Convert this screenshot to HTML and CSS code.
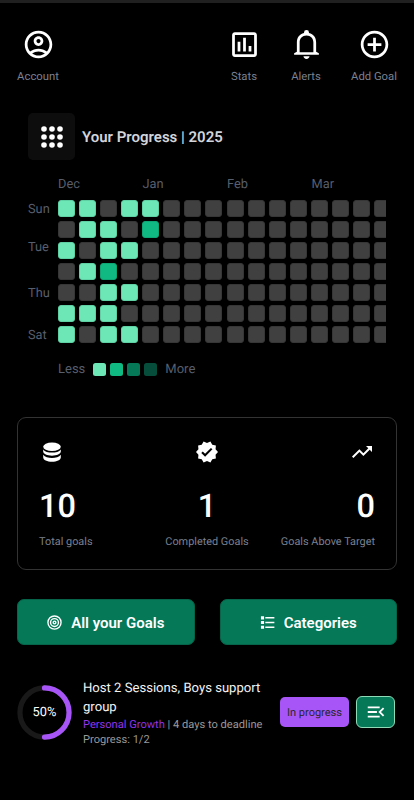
FILE: index.html
```html
<!DOCTYPE html>
<html lang="en">
<head>
<meta charset="utf-8">
<title>Goals</title>
<link rel="stylesheet" href="styles.css">
</head>
<body>
<div class="app">
  <header class="topbar">
    <a class="nav-item"><svg class="nav-icon" viewBox="0 0 24 24"><path d="M12 2C6.48 2 2 6.48 2 12s4.48 10 10 10 10-4.48 10-10S17.52 2 12 2zM7.35 18.5C8.66 17.56 10.26 17 12 17s3.34.56 4.65 1.5c-1.31.94-2.91 1.5-4.65 1.5s-3.34-.56-4.65-1.5zm10.79-1.38C16.45 15.8 14.32 15 12 15s-4.45.8-6.14 2.12C4.7 15.73 4 13.95 4 12c0-4.42 3.58-8 8-8s8 3.58 8 8c0 1.95-.7 3.73-1.86 5.12zM12 6c-1.93 0-3.5 1.57-3.5 3.5S10.07 13 12 13s3.5-1.57 3.5-3.5S13.93 6 12 6zm0 5c-.83 0-1.5-.67-1.5-1.5S11.17 8 12 8s1.5.67 1.5 1.5S12.83 11 12 11z"/></svg><span>Account</span></a>
    <nav class="actions">
      <a class="nav-item"><svg class="nav-icon" viewBox="0 0 24 24"><path d="M19 3H5c-1.1 0-2 .9-2 2v14c0 1.1.9 2 2 2h14c1.1 0 2-.9 2-2V5c0-1.1-.9-2-2-2zm0 16H5V5h14v14zM7 10h2v7H7zm4-3h2v10h-2zm4 6h2v4h-2z"/></svg><span>Stats</span></a>
      <a class="nav-item"><svg class="nav-icon" viewBox="0 0 24 24"><path d="M9.8 20.6h4.4c0 1.1-1 1.9-2.2 1.9s-2.2-.8-2.2-1.900zM19 17.300V10.500c0-3.500-1.900-6.200-5.200-6.900V3.300a1.800 1.800 0 0 0-3.600 0v.3C6.900 4.300 5 7 5 10.500v6.800l-2 1v1.100h18v-1.100zM17 17.700H7v-7.200C7 7.600 8.900 5.400 12 5.400s5 2.200 5 5.100z"/></svg><span>Alerts</span></a>
      <a class="nav-item"><svg class="nav-icon" viewBox="0 0 24 24"><path d="M13 7h-2v4H7v2h4v4h2v-4h4v-2h-4V7zm-1-5C6.480 2 2 6.480 2 12s4.480 10 10 10 10-4.480 10-10S17.520 2 12 2zm0 18c-4.410 0-8-3.590-8-8s3.590-8 8-8 8 3.590 8 8-3.590 8-8 8z"/></svg><span>Add Goal</span></a>
    </nav>
  </header>

  <section class="progress">
    <div class="progress-head">
      <div class="tile"><svg viewBox="0 0 24 24"><circle cx="4" cy="4" r="2.800"/><circle cx="12" cy="4" r="2.800"/><circle cx="20" cy="4" r="2.800"/><circle cx="4" cy="12" r="2.800"/><circle cx="12" cy="12" r="2.800"/><circle cx="20" cy="12" r="2.800"/><circle cx="4" cy="20" r="2.800"/><circle cx="12" cy="20" r="2.800"/><circle cx="20" cy="20" r="2.800"/></svg></div>
      <h2>Your Progress | 2025</h2>
    </div>
    <div class="months"><span>Dec</span><span>Jan</span><span>Feb</span><span>Mar</span></div>
    <div class="calendar">
      <div class="days"><span>Sun</span><span>Tue</span><span>Thu</span><span>Sat</span></div>
      <div class="heatmap" id="heatmap"></div>
    </div>
    <div class="legend"><span>Less</span><div class="swatches"><i class="l1"></i><i class="l2"></i><i class="l3"></i><i class="l4"></i></div><span>More</span></div>
  </section>

  <section class="summary">
    <div class="stat">
      <svg viewBox="0 0 24 24"><ellipse cx="12" cy="6.700" rx="8.800" ry="4.300"/><path d="M3.200 9.400c1.600 2.100 5.100 3.200 8.800 3.200s7.200-1.100 8.800-3.200v2.200c0 2.300-4 4.200-8.800 4.200s-8.800-1.900-8.800-4.200z"/><path d="M3.200 14.700c1.600 2.100 5.100 3.200 8.800 3.200s7.200-1.100 8.800-3.200v2.700c0 2.300-4 4.400-8.800 4.400s-8.800-2.100-8.800-4.400z"/></svg>
      <strong>10</strong><span>Total goals</span>
    </div>
    <div class="stat center">
      <svg viewBox="0 0 24 24"><path d="M23 12l-2.440-2.790.34-3.690-3.610-.82-1.890-3.200L12 2.960 8.600 1.500 6.710 4.690 3.100 5.500l.34 3.700L1 12l2.440 2.790-.34 3.700 3.610.82L8.600 22.500l3.400-1.470 3.400 1.460 1.890-3.190 3.610-.82-.34-3.690L23 12zm-12.910 4.720l-3.800-3.810 1.480-1.480 2.320 2.330 5.850-5.870 1.480 1.480-7.330 7.350z"/></svg>
      <strong>1</strong><span>Completed Goals</span>
    </div>
    <div class="stat right">
      <svg viewBox="0 0 24 24"><path d="M16 6l2.290 2.290-4.880 4.880-4-4L2 16.590 3.410 18l6-6 4 4 6.300-6.290L22 12V6z"/></svg>
      <strong>0</strong><span>Goals Above Target</span>
    </div>
  </section>

  <div class="buttons">
    <button class="button"><svg class="target" viewBox="0 0 24 24"><circle cx="12" cy="12" r="10.500"/><circle cx="12" cy="12" r="6.300"/><circle cx="12" cy="12" r="2.200"/></svg>All your Goals</button>
    <button class="button categories"><svg viewBox="0 0 24 24"><path d="M1.500 2h5v5h-5zM1.500 9.500h5v5h-5zM1.500 17h5v5h-5zM8.500 3.300H23v2.400H8.500zM8.500 10.800H23v2.400H8.500zM8.500 18.300H23v2.400H8.500z"/></svg>Categories</button>
  </div>

  <article class="goal">
    <div class="ring">
      <svg viewBox="0 0 56 56"><circle cx="28" cy="28" r="25" stroke="#191919"/><path d="M28 3a25 25 0 0 1 0 50" stroke="#a855f7" stroke-linecap="round"/></svg>
      <span class="ring-label">50%</span>
    </div>
    <div class="goal-text">
      <h3>Host 2 Sessions, Boys support group</h3>
      <p class="meta"><em>Personal Growth</em> | 4 days to deadline</p>
      <p class="meta count">Progress: 1/2</p>
    </div>
    <span class="status">In progress</span>
    <button class="menu"><svg viewBox="0 0 24 24"><path d="M3 18h13v-2H3v2zm0-5h10v-2H3v2zm0-7v2h13V6H3zm18 9.590L17.420 12 21 8.410 19.590 7l-5 5 5 5L21 15.590z"/></svg></button>
  </article>
</div>
<script src="heatmap.js"></script>
</body>
</html>
```
FILE: styles.css
```css
* { box-sizing: border-box; margin: 0; padding: 0; }
body { background: #000; color: #fff; font-family: Roboto, "Liberation Sans", sans-serif; text-rendering: geometricPrecision; }
svg { display: block; fill: currentColor; }
button { border: 0; font: inherit; color: inherit; }
.app { width: 414px; height: 800px; overflow: hidden; border-top: 3px solid #202020; padding: 25px 17px 0; }
.topbar { display: flex; justify-content: space-between; height: 60px; }
.actions { display: flex; }
.nav-item { display: flex; flex-direction: column; align-items: center; width: 42px; gap: 9px; font-size: 11.3px; line-height: 14px; color: #7b8190; white-space: nowrap; }
.nav-icon { width: 33px; height: 33px; color: #fff; }
.actions .nav-item { width: 62px; }
.actions .nav-item:last-child { width: 46px; margin-left: 14px; }

.progress { padding: 25px 11px 0; }
.progress-head { display: flex; align-items: center; gap: 7px; }
.tile { width: 47px; height: 47px; border-radius: 5px; background: #0d0d0d; display: flex; align-items: center; justify-content: center; }
.tile svg { width: 24px; height: 24px; }
.progress h2 { font-size: 15px; font-weight: 600; color: #d1d5db; white-space: nowrap; }
.months { display: grid; grid-template-columns: repeat(4, 84.500px); padding-left: 30px; margin-top: 17px; height: 23px; font-size: 12.8px; line-height: 16px; color: #575e6c; }
.calendar { display: flex; height: 144px; }
.days { width: 30px; flex: none; display: grid; grid-template-rows: 38px 46px 42px 18px; font-size: 12.8px; line-height: 20px; color: #575e6c; }
.heatmap { width: 328px; overflow: hidden; display: grid; grid-auto-flow: column; grid-template-rows: repeat(7, 17px); grid-auto-columns: 17px; gap: 4.070px; }
.cell { background: #404040; border: 1px solid #363636; border-radius: 3px; }
.cell.l1, .l1 { background: #6ee7b7; border-color: #5ed0a4; }
.cell.l2, .l2 { background: #10b981; border-color: #0ca573; }
.l3 { background: #047857; }
.l4 { background: #064e3b; }
.legend { display: flex; align-items: center; gap: 8px; margin: 16px 0 0 30px; font-size: 13px; line-height: 18px; color: #575e6c; }
.legend span { padding-top: 1px; }
.swatches { display: flex; gap: 4px; }
.swatches i { width: 13px; height: 13px; border-radius: 2.5px; }

.summary { margin-top: 38px; height: 153px; border: 1px solid #333; border-radius: 9px; padding: 22px 21px 0; display: grid; grid-template-columns: 1fr auto 1fr; }
.stat { display: flex; flex-direction: column; }
.stat svg { width: 24px; height: 24px; margin-left: 1px; }
.center svg { margin-left: 0; }
.right svg { margin-right: 1px; }
.stat strong { font-size: 32.5px; line-height: 38px; font-weight: 500; margin-top: 23px; }
.stat span { font-size: 10.9px; line-height: 14px; margin-top: 10px; color: #7b8190; white-space: nowrap; }
.center { align-items: center; }
.right { align-items: flex-end; }

.buttons { display: grid; grid-template-columns: 1fr 1fr; gap: 25px; margin-top: 29px; }
.button { height: 46px; border-radius: 7px; background: #047857; display: flex; align-items: center; justify-content: center; gap: 9px; font-size: 15px; line-height: 20px; padding-top: 1px; font-weight: 600; border: 1px solid #056449; }
.button svg { width: 15px; height: 15px; }
.button .target { fill: none; stroke: currentColor; stroke-width: 2.2; }

.goal { display: flex; align-items: center; margin-top: 32px; height: 70px; }
.ring { position: relative; width: 55px; height: 55px; flex: none; }
.ring svg { width: 55px; height: 55px; fill: none; stroke-width: 5.3; }
.ring-label { position: absolute; inset: 0; display: flex; align-items: center; justify-content: center; font-size: 12.8px; }
.goal-text { width: 191px; margin-left: 11px; padding-top: 2px; }
.goal-text h3 { font-size: 13.1px; line-height: 19px; font-weight: 400; color: #f3f3f3; }
.meta { font-size: 11.1px; line-height: 15px; color: #999; white-space: nowrap; }
.meta em { font-style: normal; color: #9333ea; }
.status { margin-left: 6px; width: 69px; height: 30px; flex: none; border-radius: 5px; background: #a855f7; color: #27272a; font-size: 11px; line-height: 31px; text-align: center; white-space: nowrap; }
.menu { margin-left: 7px; width: 39px; height: 32px; flex: none; border-radius: 6px; background: #047857; border: 1px solid #8edbb8; display: flex; align-items: center; justify-content: center; }
.menu svg { width: 22px; height: 22px; }
```
FILE: heatmap.js
```js
// One string per week, Sunday to Saturday; digits are activity levels.
const weeks = ['1010011', '1101010', '0112111', '1010101', '1200000'];
while (weeks.length < 16) weeks.push('0000000');

const heatmap = document.getElementById('heatmap');
for (const week of weeks) {
  for (const level of week) {
    const cell = document.createElement('div');
    cell.className = level === '0' ? 'cell' : `cell l${level}`;
    heatmap.appendChild(cell);
  }
}
```
